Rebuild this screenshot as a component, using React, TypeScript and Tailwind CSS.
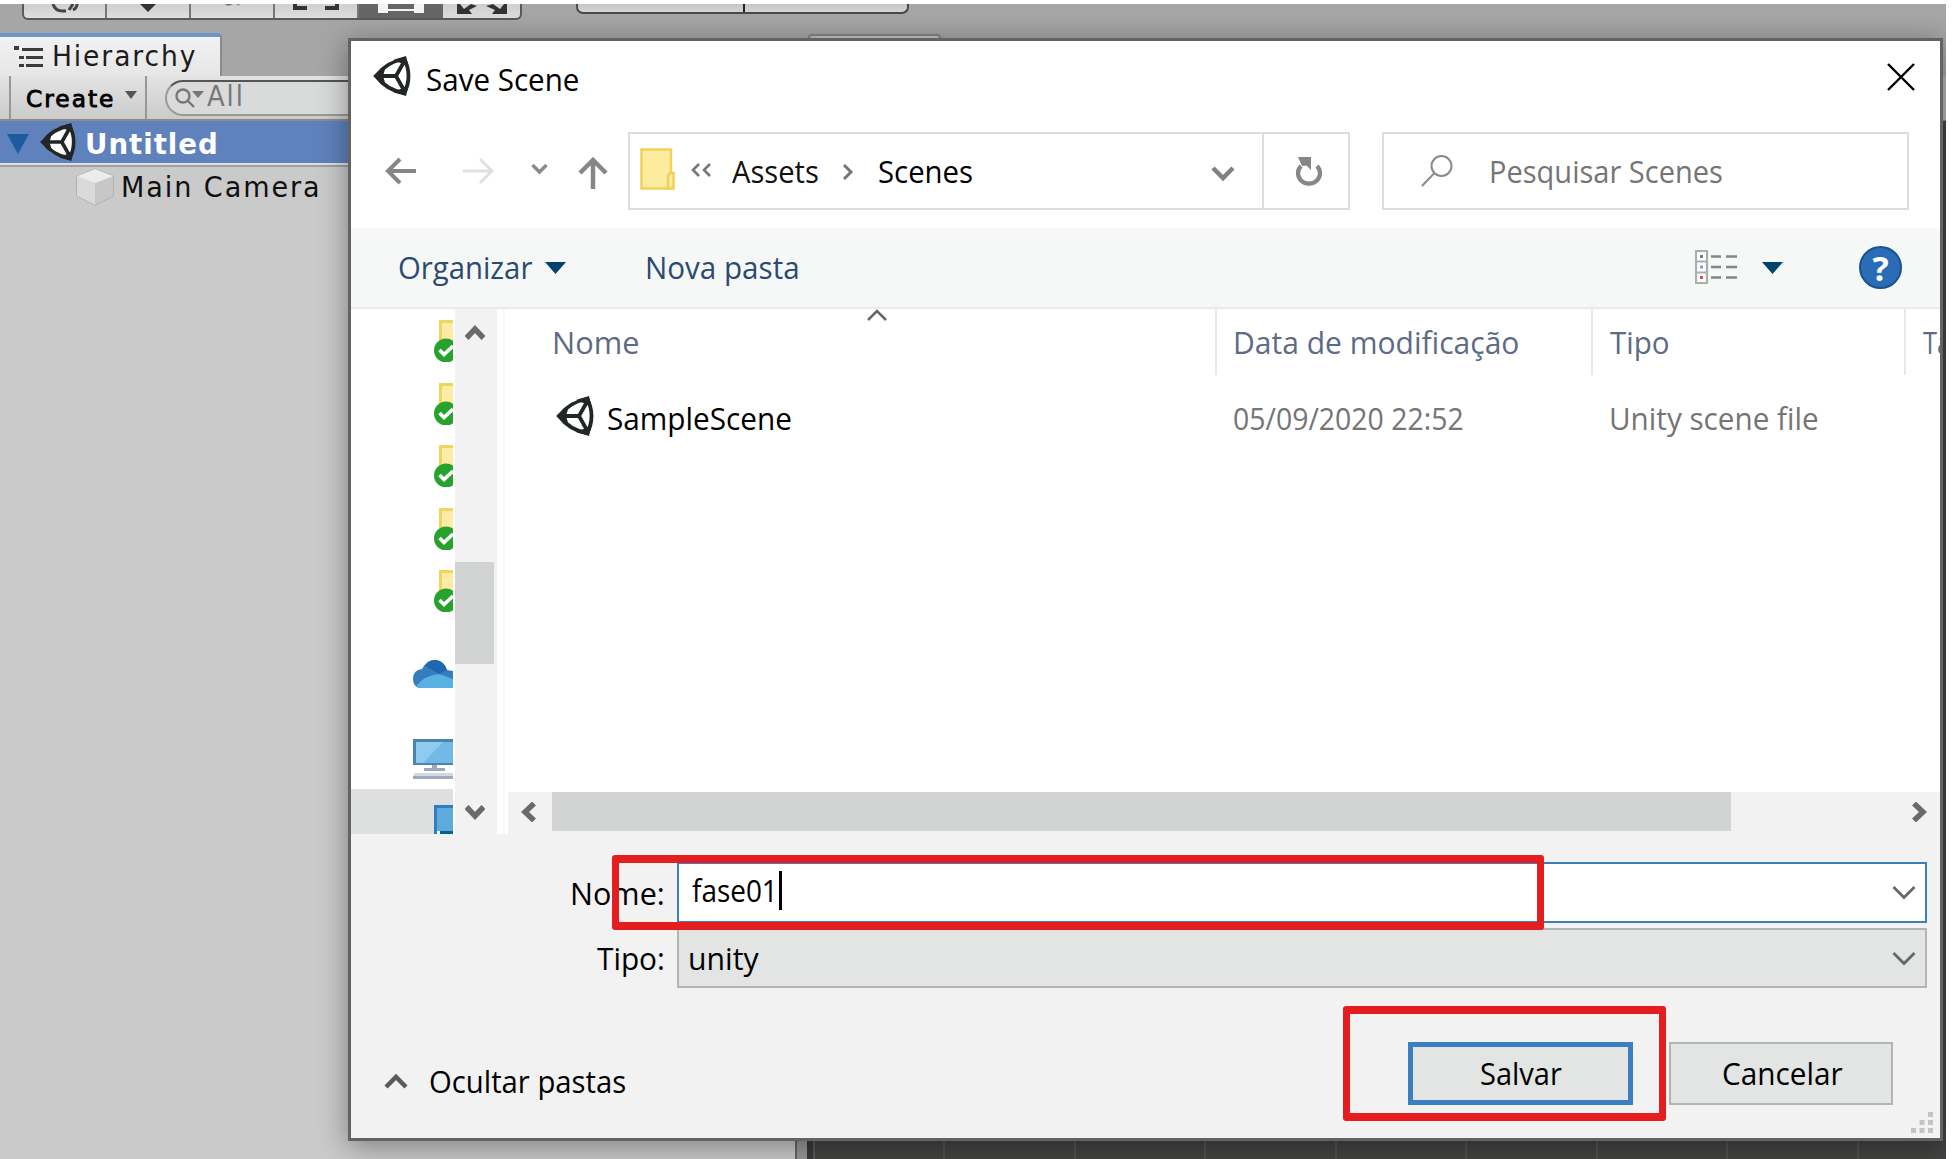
import { useLayoutEffect, useRef, useState, type ReactNode } from "react";
import clsx from "clsx";

/** One line of text stretched or condensed horizontally to a given width. */
function Fit({ w, className, children }: { w: number; className?: string; children: ReactNode }) {
  const ref = useRef<HTMLSpanElement>(null);
  const [scale, setScale] = useState(1);
  useLayoutEffect(() => {
    if (ref.current) setScale(w / ref.current.offsetWidth);
  }, [w]);
  return (
    <div className={clsx("shrink-0 whitespace-nowrap", className)} style={{ width: w }}>
      <span ref={ref} className="inline-block origin-left" style={{ transform: `scaleX(${scale})` }}>
        {children}
      </span>
    </div>
  );
}

function UnityLogo({ className, fill = "#fff" }: { className?: string; fill?: string }) {
  return (
    <svg viewBox="0 0 38 40" className={clsx("shrink-0", className)}>
      <path d="M2 20 L13 8 L31 2 L36 20 L31 38 L13 32 Z" fill={fill} />
      <path d="M3 20 C9 12 19 5 31 3 C37 13 37 27 31 37 C19 35 9 28 3 20 Z" fill="none" stroke="#222624" strokeWidth="3.800" strokeLinejoin="round" />
      <path d="M3 20 H23 M23 20 L32 4 M23 20 L32 36" fill="none" stroke="#222624" strokeWidth="3.800" />
      <path d="M0 20 L13 10 L10 20 L13 30 Z M20 4 L33 0 L36 12 L30 8 Z M20 36 L33 40 L36 28 L30 32 Z" fill="#222624" />
    </svg>
  );
}

function Chevron({ d, className, sw = 4, box = "0 0 24 16" }: { d: string; className?: string; sw?: number; box?: string }) {
  return (
    <svg viewBox={box} className={clsx("shrink-0", className)} fill="none" stroke="currentColor" strokeWidth={sw}>
      <path d={d} />
    </svg>
  );
}

function Caret({ className }: { className?: string }) {
  return (
    <svg viewBox="0 0 21 12" className={clsx("h-3 w-[21px] shrink-0", className)} fill="#00436c">
      <path d="M0 0 H21 L10.500 12 Z" />
    </svg>
  );
}

function SyncedFolder() {
  return (
    <svg viewBox="0 0 19 42" className="mb-[20.6px] ml-[83px] block h-[42px] w-[19px]">
      <rect x="5" y="0" width="16" height="26" fill="#f0d45c" />
      <rect x="8" y="3" width="12" height="24" fill="#fdeba6" />
      <circle cx="12" cy="30.500" r="12" fill="#27a22d" />
      <path d="M5.500 30 L10 34.500 L19 26" fill="none" stroke="#fff" strokeWidth="3.600" />
    </svg>
  );
}

const seg = "text-[31.5px] leading-[40px]";

function TopTools() {
  return (
    <div className="flex h-[32px] items-start">
      <div className="ml-[22px] flex h-[16px] w-[500px] overflow-hidden rounded-b-[6px] border-2 border-t-0 border-[#5a5a5a] bg-gradient-to-b from-[#cfcfcf] to-[#dedede]">
        <div className="flex w-[83px] justify-center border-r-2 border-[#777]">
          <svg viewBox="0 0 28 10" className="h-[10px] w-7" fill="none" stroke="#444" strokeWidth="3">
            <path d="M2 0 Q4 7 12 7 H15 M18 6 L22 0 M22 6 Q26 4 26 0" />
          </svg>
        </div>
        <div className="flex w-[84px] justify-center border-r-2 border-[#777]">
          <svg viewBox="0 0 16 8" className="h-2 w-4" fill="#333"><path d="M0 0 H16 L8 8 Z" /></svg>
        </div>
        <div className="flex w-[84px] justify-center border-r-2 border-[#777]">
          <svg viewBox="0 0 26 6" className="h-[4px] w-[26px]" fill="#777"><path d="M2 0 H14 Q8 5 2 0 Z M21 0 h3 v2 h-3 Z" /></svg>
        </div>
        <div className="flex w-[84px] justify-center border-r-2 border-[#777]">
          <svg viewBox="0 0 46 6" className="h-[6px] w-[46px]" fill="#333"><path d="M0 0 H4 V2 H14 V6 H0 Z M46 0 H42 V2 H32 V6 H46 Z" /></svg>
        </div>
        <div className="flex w-[84px] justify-center bg-[#656766]">
          <svg viewBox="0 0 46 9" className="h-[9px] w-[46px]" fill="#f4f4f4"><path d="M0 0 H10 V5 H36 V0 H46 V9 H36 V7 H10 V9 H0 Z" /></svg>
        </div>
        <div className="flex flex-1 justify-center">
          <svg viewBox="0 0 50 10" className="h-[10px] w-[50px]" fill="#333"><path d="M0 0 H3 L7 5 L14 0 L20 2 L12 6 L15 10 H0 Z M50 0 H47 L43 5 L36 0 L29 2 L38 6 L35 10 H50 Z" /></svg>
        </div>
      </div>
      <div className="ml-[54px] flex h-[10px] w-[333px] overflow-hidden rounded-b-[7px] border-2 border-t-0 border-[#4a4a4a] bg-gradient-to-b from-[#c4c4c4] to-[#d6d6d6]">
        <div className="w-[167px] border-r-2 border-[#222]" />
      </div>
    </div>
  );
}

function Editor() {
  return (
    <div className="flex h-[1155px] w-[1946px] flex-col bg-[#a7a6a6] font-['DejaVu_Sans']">
      <TopTools />
      <div className="flex h-[40px] items-end">
        <div className="flex h-[43px] w-[222px] shrink-0 items-center rounded-tr-[4px] border-t-4 border-r-2 border-t-[#6f94cc] border-r-[#8a8a8a] bg-gradient-to-b from-[#f2f2f2] to-[#e6e6e6] pl-[14px]">
          <svg viewBox="0 0 29 22" className="h-[22px] w-[29px] shrink-0" fill="#3c3c3c">
            <path d="M0 0 h5 v4 h-5 Z M8 2 h21 v3 H8 Z M5 10 h5 v3 h-5 Z M12 10 h17 v3 H12 Z M5 18 h5 v3 h-5 Z M12 18 h17 v3 H12 Z" />
          </svg>
          <Fit w={145} className="ml-[9px] text-[28px] leading-[40px] tracking-[2px] text-[#1c1c1c]">Hierarchy</Fit>
        </div>
      </div>
      <div className="flex h-[45px] items-start border-b-2 border-[#8b8b8b] bg-gradient-to-b from-[#e3e3e3] to-[#cbcbcb]">
        <div className="ml-[9px] flex h-[43px] w-[138px] shrink-0 items-center border-x-2 border-[#979797] pl-[14px]">
          <Fit w={89} className="mt-[3px] ml-px text-[23px] leading-[40px] tracking-[2px] text-black [-webkit-text-stroke:0.9px_#000]">Create</Fit>
          <svg viewBox="0 0 12 8" className="mb-[5px] ml-[10px] h-2 w-3 shrink-0" fill="#555"><path d="M0 0 H12 L6 8 Z" /></svg>
        </div>
        <div className="mt-[4px] ml-[18px] flex h-[36px] w-[300px] shrink-0 items-center rounded-l-full border-2 border-[#9a9a9a] border-t-[#555] bg-[#d9dbda] pl-[8px]">
          <svg viewBox="0 0 29 20" className="h-5 w-[29px] shrink-0" fill="none" stroke="#777" strokeWidth="2.400">
            <circle cx="8" cy="8" r="6.500" /><path d="M12 12 L19 19" /><path d="M17 3 H29 L23 10 Z" fill="#777" stroke="none" />
          </svg>
          <Fit w={38} className="mb-[2px] ml-[3px] text-[28px] leading-[32px] tracking-[2px] text-[#777]">All</Fit>
        </div>
      </div>
      <div className="flex flex-1">
        <div className="flex w-[795px] flex-col bg-[#cacaca]">
          <div className="flex h-[42px] items-center bg-[#5f82bd] pl-[7px]">
            <svg viewBox="0 0 22 20" className="mt-1 h-5 w-[22px] shrink-0" fill="#1c5c9e"><path d="M0 0 H22 L11 20 Z" /></svg>
            <UnityLogo className="mb-px ml-[10px] h-[38px] w-[38px]" />
            <Fit w={134} className="mt-[6px] ml-[8px] text-[28px] leading-[40px] font-bold tracking-[1px] text-white">Untitled</Fit>
          </div>
          <div className="h-[4px] border-t-2 border-b-2 border-t-[#dedede] border-b-[#a0a0a0]" />
          <div className="flex h-[42px] items-center pl-[76px]">
            <svg viewBox="0 0 38 38" className="-mt-[2px] h-[38px] w-[38px] shrink-0" stroke="#999" strokeWidth="1">
              <path d="M1 8 L19 1 L37 8 V28 L19 37 L1 28 Z" fill="#dcdcdc" />
              <path d="M1 8 L19 15 V37 L1 28 Z" fill="#d9dbda" stroke="none" /><path d="M37 8 L19 15 V37 L37 28 Z" fill="#c6c8c7" stroke="none" />
              <path d="M1 8 L19 1 L37 8 L19 15 Z" fill="#ececec" stroke="none" />
            </svg>
            <Fit w={201} className="-mt-px ml-[7px] text-[28px] leading-[40px] tracking-[2px] text-[#101010]">Main Camera</Fit>
          </div>
        </div>
        <div className="w-[12px] border-l-2 border-[#666] bg-[#989898]" />
        <div className="w-[8px] border-r-2 border-r-[#5a5b5a] bg-[#383938]" />
        <div className="flex flex-1 bg-[#434442]">
          <div className="w-[130px] border-r-2 border-[#525351]" />
          {[0, 1, 2, 3, 4, 5, 6].map((i) => (
            <div key={i} className="w-[130.5px] border-r-2 border-[#525351]" />
          ))}
        </div>
      </div>
    </div>
  );
}

function NavRow() {
  return (
    <div className="mt-[91px] flex h-[78px] items-center pl-[34px]">
      <Chevron box="0 0 32 28" d="M31 14 H3 M15 2 L3 14 L15 26" className="h-[28px] w-8 text-[#868686]" />
      <Chevron box="0 0 32 28" sw={3} d="M0 14 H29 M17 2 L29 14 L17 26" className="ml-[46px] h-[28px] w-8 text-[#dfe1e0]" />
      <Chevron box="0 0 17 12" sw={3.500} d="M1.500 2 L8.500 9 L15.500 2" className="-mt-1 ml-[36px] h-3 w-[17px] text-[#8a8a8a]" />
      <Chevron box="0 0 30 32" sw={4.500} d="M15 32 V4 M2 16 L15 3 L28 16" className="mt-1 ml-[30px] h-8 w-[30px] text-[#868686]" />
      <div className="ml-[20px] flex h-full w-[722px] shrink-0 border-2 border-[#dcdedd]">
        <div className="flex w-[632px] shrink-0 items-center pl-[10px]">
          <svg viewBox="0 0 35 42" className="-mt-[5px] h-[42px] w-[35px] shrink-0" stroke="#efd25c" strokeWidth="2.500">
            <path d="M1.500 1.500 H31 V40.500 H1.500 Z" fill="#fdeb9e" /><path d="M28 40.500 V28 L30 25 H33.500 V40.500 Z" fill="#fdeb9e" />
          </svg>
          <Chevron box="0 0 22 14" sw={2.600} d="M9 1 L3 7 L9 13 M20 1 L14 7 L20 13" className="-mt-[2px] ml-[15px] h-[14px] w-[22px] text-[#777]" />
          <Fit w={87} className={clsx(seg, "-mt-px ml-[20px] text-[#111]")}>Assets</Fit>
          <Chevron box="0 0 12 16" sw={3} d="M2 1 L9 8 L2 15" className="mt-[2px] ml-[23px] h-4 w-3 text-[#777]" />
          <Fit w={95} className={clsx(seg, "-mt-px ml-[24px] text-black")}>Scenes</Fit>
          <Chevron d="M2 2 L12 12 L22 2" sw={4.500} className="mt-[5px] ml-auto mr-[27px] h-4 w-6 text-[#808080]" />
        </div>
        <div className="flex flex-1 items-center justify-center border-l-2 border-[#dcdedd] pl-[6px]">
          <svg viewBox="0 0 28 30" className="mt-[2px] h-[30px] w-7" fill="none" stroke="#868686" strokeWidth="4.200">
            <path d="M6 9 A11 10.500 0 1 0 22 9" /><path d="M3 0 H16 V13 L11.500 8.500 L7 9 Z" fill="#868686" stroke="none" />
          </svg>
        </div>
      </div>
      <div className="ml-[32px] flex h-full w-[527px] shrink-0 items-center border-2 border-[#dcdedd] pl-[37px]">
        <svg viewBox="0 0 32 32" className="h-8 w-8 shrink-0" fill="none" stroke="#8d8790" strokeWidth="2">
          <circle cx="20.500" cy="11" r="10" /><path d="M13 18.500 L1 31" />
        </svg>
        <Fit w={234} className={clsx(seg, "-mt-px ml-[36px] text-[#757575]")}>Pesquisar Scenes</Fit>
      </div>
    </div>
  );
}

function ToolRow() {
  return (
    <div className="mt-[18px] flex h-[81px] items-center border-b-2 border-[#e9ebea] bg-[#f6f8f7] pl-[47px]">
      <Fit w={134} className={clsx(seg, "-mt-[2px] text-[#2b4a70]")}>Organizar</Fit>
      <Caret className="ml-[13px]" />
      <Fit w={155} className={clsx(seg, "-mt-[2px] ml-[79px] text-[#2b4a70]")}>Nova pasta</Fit>
      <svg viewBox="0 0 42 34" className="-mt-[2px] ml-auto h-[34px] w-[42px] shrink-0">
        <path d="M1 1 H12 V33 H1 Z M1 11.500 H12 M1 22.500 H12" fill="#fff" stroke="#adadad" strokeWidth="2.200" />
        <path d="M16 6.500 H26 M31 6.500 H42 M16 17 H26 M31 17 H42 M16 27.500 H26 M31 27.500 H42" stroke="#858585" strokeWidth="2.600" />
        <path d="M5 5 h3 v3 h-3 Z" fill="#5b8a78" /><path d="M5 15.500 h3 v3 h-3 Z" fill="#6e9fe0" /><path d="M5 26 h3 v3 h-3 Z" fill="#e0503c" />
      </svg>
      <Caret className="ml-[25px]" />
      <div className="mr-[38px] ml-[76px] flex h-[43px] w-[43px] shrink-0 items-center justify-center rounded-full border-2 border-[#14558f] bg-[#2a6cb5] font-['Open_Sans'] text-[34px] leading-none font-bold text-white">?</div>
    </div>
  );
}

function Sidebar() {
  return (
    <div className="flex h-full w-[154px] shrink-0 border-r-2 border-[#f7f7f7] pr-[5px]">
      <div className="flex w-[102px] shrink-0 flex-col overflow-hidden pt-[11px]">
        {[0, 1, 2, 3, 4].map((i) => (
          <SyncedFolder key={i} />
        ))}
        <svg viewBox="0 0 40 30" className="mt-[26px] ml-[62px] h-[30px] w-10 shrink-0">
          <path d="M0 20 Q0 11 9 10 Q14 0 23 1 Q31 2 34 11 L40 12 V29 H6 Q0 27 0 20 Z" fill="#367cc1" />
          <path d="M12 7 Q17 0 23 1 Q31 2 34 11 L26 15 Z" fill="#1f68b0" />
          <path d="M3 27 Q12 16 26 15 L40 20 V29 H6 Z" fill="#58b0e3" />
        </svg>
        <svg viewBox="0 0 40 40" className="mt-[50px] ml-[62px] h-10 w-10 shrink-0">
          <path d="M0 0 H40 V26 H0 Z" fill="#4d84ae" /><path d="M3 3 H40 V24 H3 Z" fill="#72b9e6" /><path d="M3 3 H30 L10 24 H3 Z" fill="#8fcbef" />
          <path d="M19 26 h5 v3 h-5 Z M11 29 h21 v3 H11 Z M0 37 h40 v3 H0 Z" fill="#9caabd" /><path d="M2 34 H40 V37 H0 Z" fill="#d2dae0" />
        </svg>
        <div className="mt-[10px] flex flex-1 items-end justify-end bg-[#dde0df]">
          <svg viewBox="0 0 19 29" className="h-[29px] w-[19px]">
            <path d="M0 0 H19 V29 H0 Z" fill="#2b7fc2" /><path d="M3 3 H19 V26 H3 Z" fill="#60a9dc" /><path d="M6 26 H19 V29 H6 Z" fill="#00639c" /><path d="M3 26 h3 v3 H3 Z" fill="#fff" />
          </svg>
        </div>
      </div>
      <div className="ml-[2px] flex w-[42px] shrink-0 flex-col items-center bg-[#f2f2f2] pt-[15px] pb-[13px]">
        <Chevron box="0 0 20 16" sw={5.500} d="M1.500 14 L10 5 L18.500 14" className="mr-[3px] h-4 w-5 text-[#6a6a6a]" />
        <div className="mt-[222px] h-[102px] w-[39px] self-start bg-[#d2d4d3]" />
        <Chevron box="0 0 20 16" sw={5.500} d="M1.500 2 L10 11 L18.500 2" className="mt-auto mr-[3px] h-4 w-5 text-[#6a6a6a]" />
      </div>
    </div>
  );
}

function FileList() {
  return (
    <div className="flex min-w-0 flex-1 flex-col">
      <div className="flex h-[66px] items-start overflow-hidden text-[#5d6b85]">
        <div className="flex h-full w-[712px] shrink-0 border-r-2 border-[#e7e9e8] pl-[47px]">
          <Fit w={88} className={clsx(seg, "mt-[13px]")}>Nome</Fit>
          <Chevron box="0 0 20 12" sw={2.500} d="M1 11 L10 2 L19 11" className="ml-[227px] h-3 w-5 text-[#666]" />
        </div>
        <div className="h-full w-[376px] shrink-0 border-r-2 border-[#e7e9e8] pt-[13px] pl-[16px]">
          <Fit w={286} className={seg}>Data de modificação</Fit>
        </div>
        <div className="h-full w-[313px] shrink-0 border-r-2 border-[#e7e9e8] pt-[13px] pl-[17px]">
          <Fit w={60} className={seg}>Tipo</Fit>
        </div>
        <Fit w={112} className={clsx(seg, "mt-[13px] ml-[17px]")}>Tamanho</Fit>
      </div>
      <div className="mt-[18px] flex h-[50px] items-center pl-[51px] text-[#757575]">
        <UnityLogo className="-mt-[5px] h-10 w-[38px]" />
        <Fit w={185} className={clsx(seg, "ml-[13px] text-black")}>SampleScene</Fit>
        <Fit w={231} className={clsx(seg, "ml-[441px]")}>05/09/2020 22:52</Fit>
        <Fit w={210} className={clsx(seg, "ml-[145px]")}>Unity scene file</Fit>
      </div>
      <div className="mt-auto flex h-[42px] items-start bg-[#f2f2f2]">
        <div className="h-full w-[3px] bg-white" />
        <div className="flex h-[39px] flex-1 items-center pl-[12px]">
          <Chevron box="0 0 16 20" sw={5.500} d="M14 1.500 L5 10 L14 18.500" className="h-5 w-4 text-[#6a6a6a]" />
          <div className="ml-[16px] h-[39px] w-[1179px] bg-[#d2d4d3]" />
          <Chevron box="0 0 16 20" sw={5.500} d="M2 1.500 L11 10 L2 18.500" className="mr-[12px] ml-auto h-5 w-4 text-[#6a6a6a]" />
        </div>
      </div>
    </div>
  );
}

function Footer() {
  return (
    <div className="relative flex flex-1 flex-col bg-[#f2f2f2] pt-[28px]">
      <div className="flex h-[61px] items-center">
        <Fit w={95} className={clsx(seg, "ml-[219px] text-black")}>Nome:</Fit>
        <div className="ml-[12px] flex h-[61px] w-[1250px] items-center border-2 border-[#3b7dbf] bg-white pr-[9px] pl-[13px]">
          <Fit w={86} className={clsx(seg, "mb-[5px] text-black")}>fase01</Fit>
          <div className="mb-[5px] ml-px h-[39px] w-[3px] bg-black" />
          <Chevron d="M1.500 2 L12 12.500 L22.500 2" sw={2.800} className="mt-px ml-auto h-4 w-6 text-[#666]" />
        </div>
      </div>
      <div className="mt-[5px] flex h-[60px] items-center">
        <Fit w={68} className={clsx(seg, "ml-[246px] text-black")}>Tipo:</Fit>
        <div className="ml-[12px] flex h-[60px] w-[1250px] items-center border-2 border-[#b3b5b4] bg-[#e3e5e4] pr-[9px] pl-[9px]">
          <Fit w={71} className={clsx(seg, "text-black")}>unity</Fit>
          <Chevron d="M1.500 2 L12 12.500 L22.500 2" sw={2.800} className="mt-[2px] ml-auto h-4 w-6 text-[#666]" />
        </div>
      </div>
      <div className="mt-[54px] flex h-[63px] items-center pl-[33px]">
        <Chevron d="M2 14 L12 4 L22 14" sw={4.500} className="mt-[15px] h-4 w-6 text-[#5a5a5a]" />
        <Fit w={197} className={clsx(seg, "mt-[14px] ml-[21px] text-black")}>Ocultar pastas</Fit>
        <button className="ml-[782px] flex h-[63px] w-[225px] shrink-0 items-center justify-center border-[5px] border-[#3b7fc1] bg-[#e3e5e4]">
          <Fit w={82} className={clsx(seg, "-mt-[2px] text-black")}>Salvar</Fit>
        </button>
        <button className="ml-[36px] flex h-[63px] w-[224px] shrink-0 items-center justify-center border-2 border-[#b3b5b4] bg-[#e3e5e4]">
          <Fit w={121} className={clsx(seg, "-mt-[2px] ml-[3px] text-black")}>Cancelar</Fit>
        </button>
      </div>
      {/* resize grip */}
      <svg viewBox="0 0 22 22" className="absolute right-[7px] bottom-[4px] h-[22px] w-[22px]" fill="#c3c5c4">
        <path d="M17 0 h5 v5 h-5 Z M8.500 8 h5 v5 h-5 Z M17 8 h5 v5 h-5 Z M0 16 h5 v5 h-5 Z M8.500 16 h5 v5 h-5 Z M17 16 h5 v5 h-5 Z" />
      </svg>
      {/* highlight frames */}
      <div className="absolute top-[21px] left-[261px] h-[75px] w-[932px] rounded-[3px] border-[7px] border-y-8 border-[#e41e1f]" />
      <div className="absolute top-[172px] left-[992px] h-[115px] w-[323px] rounded-[3px] border-[7px] border-y-8 border-[#e41e1f]" />
    </div>
  );
}

export default function App() {
  return (
    <div className="relative h-[1159px] w-[1958px] overflow-hidden bg-white pt-1">
      <div className="relative h-[1155px] w-[1946px] overflow-hidden">
        <Editor />
        {/* tab peeking out behind the dialog */}
        <div className="absolute top-[30px] left-[808px] h-[8px] w-[133px] rounded-t-[4px] border-2 border-[#858585] bg-[#c5c5c5]" />
        <div className="absolute top-[72px] right-0 h-[44px] w-1 bg-[#b5b5b5]" />
        <div className="absolute top-[34px] left-[348px] flex h-[1103px] w-[1595px] flex-col border-[3px] border-[#626463] bg-white font-['Open_Sans',sans-serif] shadow-[0_5px_28px_rgba(0,0,0,0.38)]">
          {/* title bar */}
          <div className="-mb-[91px] flex h-[91px] items-start pl-[22px]">
            <UnityLogo className="mt-[15px] h-10 w-[38px]" />
            <Fit w={153} className={clsx(seg, "mt-[18px] ml-[15px] text-black")}>Save Scene</Fit>
            <svg viewBox="0 0 28 28" className="mt-[22px] mr-[25px] ml-auto h-7 w-7 shrink-0" stroke="#000" strokeWidth="2.400"><path d="M1 1 L27 27 M27 1 L1 27" /></svg>
          </div>
          <NavRow />
          <ToolRow />
          <div className="flex h-[525px] shrink-0">
            <Sidebar />
            <FileList />
          </div>
          <Footer />
        </div>
      </div>
    </div>
  );
}
